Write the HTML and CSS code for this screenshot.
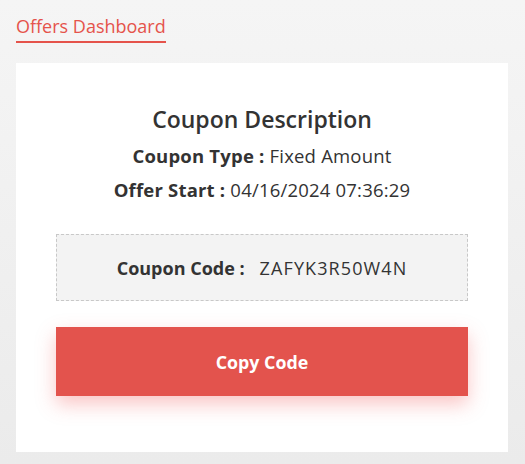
FILE: index.html
```html
<!DOCTYPE html>
<html>
<head>
<meta charset="utf-8">
<link rel="stylesheet" href="styles.css">
</head>
<body>
<div class="page">
  <div class="tabs"><span class="tab">Offers Dashboard</span></div>
  <div class="card">
    <h2 class="title">Coupon Description</h2>
    <p class="line"><b>Coupon Type :</b> Fixed Amount</p>
    <p class="line"><b>Offer Start :</b> 04/16/2024 07:36:29</p>
    <div class="code"><b>Coupon Code :</b><span class="code-val">ZAFYK3R50W4N</span></div>
    <button class="copy">Copy Code</button>
  </div>
</div>
</body>
</html>
```
FILE: styles.css
```css
html, body { margin: 0; height: 100%; }
body {
  background: linear-gradient(180deg, #f5f5f5 0%, #ebebeb 100%);
  font-family: "Open Sans", "Noto Sans", sans-serif;
  color: #333;
}
.page { padding: 13px 17px 0 16px; }
.tabs { display: flex; }
.tab {
  color: #e5534b;
  font-size: 18px;
  line-height: 26px;
  padding-bottom: 2px;
  border-bottom: 2px solid #e5534b;
}
.card {
  margin-top: 20px;
  background: #fff;
  padding: 40px 40px 56px;
  display: flex;
  flex-direction: column;
  align-items: stretch;
  text-align: center;
}
.title {
  margin: 0 0 4px;
  font-size: 23px;
  font-weight: 600;
  line-height: 32px;
  color: #333;
}
.line {
  margin: 0;
  font-size: 18.5px;
  line-height: 34px;
  color: #333;
  letter-spacing: 0.2px;
}
.line b { font-weight: 700; }
.code {
  margin-top: 27px;
  height: 67px;
  box-sizing: border-box;
  background: #f3f3f3;
  border: 1px dashed #c8c8c8;
  display: flex;
  align-items: center;
  justify-content: center;
  font-size: 18px;
}
.code-val { margin-left: 15px; letter-spacing: 1.1px; }
.copy {
  margin-top: 26px;
  height: 69px;
  border: none;
  background: #e3534d;
  color: #fff;
  font-family: inherit;
  font-size: 17.8px;
  font-weight: 700;
  box-shadow: 0 8px 18px rgba(240, 90, 90, 0.35);
}
```
